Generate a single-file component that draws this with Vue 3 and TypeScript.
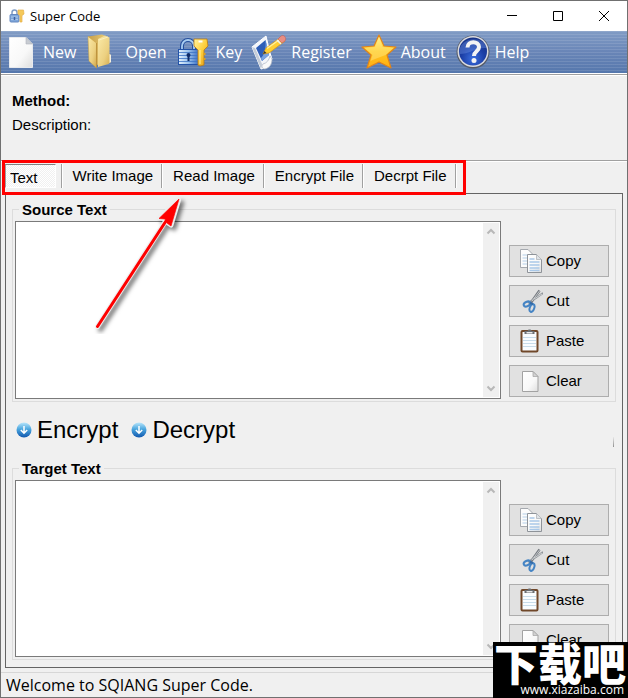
<script setup lang="ts">
import { ref } from 'vue'

interface Group {
  id: string
  title: string
}

const tools: string[] = ['New', 'Open', 'Key', 'Register', 'About', 'Help']
const tabs: string[] = ['Text', 'Write Image', 'Read Image', 'Encrypt File', 'Decrpt File']
const edits: string[] = ['Copy', 'Cut', 'Paste', 'Clear']
const source: Group = { id: 'source', title: 'Source Text' }
const target: Group = { id: 'target', title: 'Target Text' }
const groups: Group[] = [source, target]
const actions: string[] = ['Encrypt', 'Decrypt']

const activeTab = ref<string>('Text')
const texts = ref<Record<string, string>>({ source: '', target: '' })

function edit(id: string, action: string): void {
  if (action === 'Clear') texts.value[id] = ''
}
</script>

<template>
  <div class="window">
    <svg class="defs" width="0" height="0" aria-hidden="true">
      <defs>
        <linearGradient id="paper" x1="0" y1="0" x2="1" y2="1">
          <stop offset="0" stop-color="#ffffff" /><stop offset=".6" stop-color="#f8f8f8" /><stop offset="1" stop-color="#dedede" />
        </linearGradient>
        <linearGradient id="gold" x1="0" y1="0" x2="1" y2="1">
          <stop offset="0" stop-color="#fff3a0" /><stop offset=".5" stop-color="#ffcf3a" /><stop offset="1" stop-color="#dd9416" />
        </linearGradient>
        <linearGradient id="folderBack" x1="0" y1="0" x2="1" y2="0">
          <stop offset="0" stop-color="#c79f48" /><stop offset="1" stop-color="#ecd07c" />
        </linearGradient>
        <linearGradient id="folderFront" x1="0" y1="0" x2="1" y2="1">
          <stop offset="0" stop-color="#fbeaa8" /><stop offset=".6" stop-color="#ecd080" /><stop offset="1" stop-color="#d0a648" />
        </linearGradient>
        <linearGradient id="lock" x1="0" y1="0" x2="1" y2="0">
          <stop offset="0" stop-color="#e4f1fd" /><stop offset=".5" stop-color="#9cc3ec" /><stop offset="1" stop-color="#3c6fc4" />
        </linearGradient>
        <linearGradient id="star" x1="0" y1="0" x2="0" y2="1">
          <stop offset="0" stop-color="#fff08a" /><stop offset=".5" stop-color="#ffc620" /><stop offset="1" stop-color="#ffae12" />
        </linearGradient>
        <radialGradient id="helpBall" cx=".5" cy=".75" r=".75">
          <stop offset="0" stop-color="#3b6fe0" /><stop offset=".55" stop-color="#1c3fa6" /><stop offset="1" stop-color="#173284" />
        </radialGradient>
        <linearGradient id="ball" x1="0" y1="0" x2="0" y2="1">
          <stop offset="0" stop-color="#b9e6fb" /><stop offset=".45" stop-color="#49a5de" /><stop offset="1" stop-color="#1157ae" />
        </linearGradient>
      </defs>
    </svg>

    <header class="titlebar">
      <svg class="app-icon" viewBox="0 0 16 16" aria-hidden="true">
        <path d="M3 7V4.500a2.500 2.500 0 0 1 5 0V7" fill="none" stroke="#7f9cc6" stroke-width="1.500" />
        <rect x="1" y="6.500" width="9" height="7.500" rx="1" fill="#7fa6da" stroke="#6488c0" />
        <path d="M2 9h7M2 11.500h7" stroke="#abc8ec" />
        <path d="M5.500 9v3" stroke="#3c5f9e" stroke-width="1.500" />
        <path d="M9 2h5.500l.5 4-2 1.500V14h-2V7.500L9 6z" fill="#f5c95a" stroke="#e6b04a" stroke-width=".7" />
      </svg>
      <h1>Super Code</h1>
      <div class="caption">
        <button type="button" aria-label="Minimize"><svg viewBox="0 0 12 12"><path d="M1 5.500h10" /></svg></button>
        <button type="button" aria-label="Maximize"><svg viewBox="0 0 12 12"><path d="M1.500 1.500h9v9h-9z" /></svg></button>
        <button type="button" aria-label="Close"><svg viewBox="0 0 12 12"><path d="M1 1l10 10M11 1L1 11" /></svg></button>
      </div>
    </header>

    <nav class="toolbar" aria-label="Main">
      <button v-for="t in tools" :key="t" type="button" class="tool">
        <svg viewBox="0 0 36 36" aria-hidden="true">
          <g v-if="t === 'New'">
            <path d="M6.500 3.500H23L29.500 10v23.500h-23z" fill="url(#paper)" stroke="#e8eaee" />
            <path d="M23 3.500V10h6.500z" fill="#c8ccd2" stroke="#aeb4bd" stroke-width=".6" />
          </g>
          <g v-else-if="t === 'Open'">
            <path d="M3 2.500l14-2 7 3v22l-13 6z" fill="url(#folderBack)" />
            <path d="M13 5l7-3.500 4.500 2V20l1.500 1v7l-2.500 2-10.500 3z" fill="url(#folderFront)" />
            <path d="M24.500 20l1.500 1v7l-1.500 1z" fill="#f2efe2" />
            <path d="M14 6l9-3" stroke="#fdf3c8" stroke-width=".8" />
            <path d="M3 2.500l8.500 6.500v25L4 27z" fill="url(#folderFront)" stroke="#caa040" stroke-width=".5" />
            <path d="M11.500 9v24.500" stroke="#b98d38" stroke-width=".8" />
          </g>
          <g v-else-if="t === 'Key'">
            <path d="M7 16v-4a6 6 0 0 1 12 0v4" fill="none" stroke="#264f9c" stroke-width="4" />
            <path d="M7 16v-4a6 6 0 0 1 12 0v4" fill="none" stroke="#a8cdf2" stroke-width="1.800" />
            <rect x="3.500" y="15.500" width="20" height="15" fill="url(#lock)" stroke="#2353a8" />
            <path d="M4 18.500h19M4 21.500h19M4 24.500h19M4 27.500h19" stroke="#3b74c5" stroke-width=".8" />
            <circle cx="13.500" cy="21" r="2" fill="#0e2b68" /><path d="M13.500 21v6" stroke="#0e2b68" stroke-width="2" />
            <path d="M19 5h13l1 7-4 4v15l-4 1-2-1V16l-4-4z" fill="url(#gold)" stroke="#b97b14" stroke-width=".8" />
            <path d="M23.500 7.500h4" stroke="#fff" stroke-width="2" /><path d="M25 16v14" stroke="#fff0a0" />
            <path d="M28.500 19h2v2h-2M28.500 24h2v2h-2" fill="#dda01d" />
          </g>
          <g v-else-if="t === 'Register'">
            <path d="M1 13L15 2l4 17 2 6-7 9-4 1z" fill="#f4f6fa" stroke="#fff" />
            <path d="M5 14l9.500-8 3.500 15-7 6z" fill="#2e5eb8" />
            <path d="M14.500 6L18 21l-7 6-1-3c4-4 5-10 4.500-18z" fill="#7aa3e0" />
            <path d="M1 13l3 1 7 16-1 5z" fill="#c4ccd8" />
            <path d="M12 30c4-1 6-4 7-8l2 3c0 6-3 9-7 10-3 0-4-3-2-5z" fill="#fafafa" stroke="#aab3c1" stroke-width=".7" />
            <path d="M12 20l3-6L30 3l4 4-16 12z" fill="#ffcf32" stroke="#d89512" stroke-width=".7" />
            <path d="M16 14.500L30 4.500" stroke="#fff19a" stroke-width="1.500" />
            <path d="M27 5l3-3c3-2 6 2 4 5l-3 2z" fill="#e98e83" stroke="#bd625b" stroke-width=".6" />
            <path d="M26 6l4 4" stroke="#edeff1" stroke-width="1.500" /><path d="M12 20l1.500-3 2 2z" fill="#353535" />
          </g>
          <g v-else-if="t === 'About'">
            <path d="M18 1l5 11 12 1-9 8 4 13-12-6-12 6 4-13-9-8 12-1z" fill="url(#star)" stroke="#e0841b" stroke-width="1.200" stroke-linejoin="round" />
            <path d="M18 3l3.500 10 11 1-8 7-13 5-2 1 2-6-8-7 10.500-1z" fill="#fff6a8" opacity=".35" />
          </g>
          <g v-else>
            <circle cx="18" cy="18" r="16.500" fill="#555b67" /><circle cx="18" cy="17.500" r="15.500" fill="#d9dbe0" />
            <circle cx="18" cy="17.500" r="14" fill="url(#helpBall)" />
            <path d="M4.500 16C7 2 29 2 31.500 14 22 13 14 20 4.500 20z" fill="#7aa0ef" opacity=".35" />
            <path d="M12.500 13.500c0-7 11.500-7 11.500-.5 0 4.500-5 4-5 9" fill="none" stroke="#f4f4f4" stroke-width="4" />
            <circle cx="19" cy="26.500" r="2.500" fill="#f4f4f4" />
          </g>
        </svg>
        <span>{{ t }}</span>
      </button>
    </nav>

    <section class="info">
      <p class="method">Method:</p>
      <p>Description:</p>
    </section>

    <div class="tabs" role="tablist">
      <div v-for="t in tabs" :key="t" class="tab-cell">
        <button type="button" role="tab" class="tab" :class="{ active: t === activeTab }" :aria-selected="t === activeTab" @click="activeTab = t">{{ t }}</button>
      </div>
      <div class="tabs-mark"></div>
    </div>

    <main class="panel">
      <template v-for="g in groups" :key="g.id">
        <fieldset class="group">
          <legend :id="g.id + '-title'">{{ g.title }}</legend>
          <div class="field">
            <textarea v-model="texts[g.id]" :aria-labelledby="g.id + '-title'"></textarea>
            <div class="scroll" aria-hidden="true">
              <svg viewBox="0 0 16 16"><path d="M4.500 10L8 6.500 11.500 10" /></svg>
              <svg viewBox="0 0 16 16"><path d="M4.500 6L8 9.500 11.500 6" /></svg>
            </div>
          </div>
          <div class="edits">
            <button v-for="e in edits" :key="e" type="button" class="edit" @click="edit(g.id, e)">
              <svg viewBox="0 0 24 24" aria-hidden="true">
                <g v-if="e === 'Copy'">
                  <path d="M1.500.500H9L13.500 5v13.500h-12z" fill="#fcfcfc" stroke="#a5a9af" />
                  <path d="M3.500 6h7M3.500 9h7M3.500 12h7M3.500 15h7" stroke="#b4cfe9" />
                  <path d="M8.500 5.500h9l5 5v13h-14z" fill="url(#paper)" stroke="#8e9399" />
                  <path d="M17.500 5.500v5h5" fill="#dfe3e7" stroke="#a9adb2" stroke-width=".7" />
                  <path d="M10.500 10h5M10.500 13h10M10.500 16h10M10.500 19h10M10.500 21.500h10" stroke="#a9c8e8" stroke-width="1.400" />
                </g>
                <g v-else-if="e === 'Cut'" fill="none">
                  <path d="M20.500 1.500L16 8l-5 7" stroke="#74797f" stroke-width="2.500" />
                  <path d="M24 4l-7 5-8 5" stroke="#8f9499" stroke-width="2" />
                  <path d="M20.500 2L13 12M23 5l-8 5" stroke="#e6e8ea" stroke-width=".7" />
                  <ellipse cx="8" cy="15" rx="3.500" ry="2.200" transform="rotate(-25 8 15)" stroke="#4584c4" stroke-width="2" />
                  <ellipse cx="13" cy="19" rx="2.200" ry="4" transform="rotate(20 13 19)" stroke="#4584c4" stroke-width="2" />
                  <path d="M11 14l3 1" stroke="#356ba7" stroke-width="2" />
                </g>
                <g v-else-if="e === 'Paste'">
                  <rect x="2.500" y="2" width="16" height="20.500" rx="1" fill="#fafdff" stroke="#70482a" stroke-width="2" />
                  <path d="M4 8.500h13M4 11.500h13M4 14.500h13M4 17.500h13" stroke="#c8dcea" />
                  <path d="M5.500 2h3l1-1.500h2L13 2h2.500v3h-10z" fill="#6b6e72" /><path d="M7.500 3h6v1.500h-6z" fill="#e8e9ea" />
                </g>
                <g v-else>
                  <path d="M3.500 2.500h10.500l5 5v15H3.500z" fill="url(#paper)" stroke="#a2a2a2" />
                  <path d="M14 2.500v5h5z" fill="#d2d2d2" stroke="#a2a2a2" stroke-width=".7" />
                </g>
              </svg>
              <span>{{ e }}</span>
            </button>
          </div>
        </fieldset>
        <div v-if="g.id === 'source'" class="actions">
          <button v-for="a in actions" :key="a" type="button" class="action">
            <svg viewBox="0 0 16 16" aria-hidden="true">
              <circle cx="8" cy="8" r="7.500" fill="url(#ball)" />
              <path d="M8 4v7M4.800 8L8 11.200 11.200 8" fill="none" stroke="#fff" stroke-width="1.500" />
            </svg>
            <span>{{ a }}</span>
          </button>
          <i class="grip"></i>
        </div>
      </template>
    </main>

    <footer class="status">Welcome to SQIANG Super Code.</footer>

    <svg class="arrow" viewBox="0 0 100 144" aria-hidden="true">
      <path d="M7.500 136.500L75 32M88.500 10L70 28l7 1 1 4 3 2z" fill="#eee" stroke="#eee" stroke-width="5" stroke-linecap="round" stroke-linejoin="round" class="halo" />
      <path d="M7.500 136.500L76 31" stroke="#f00" stroke-width="3" stroke-linecap="round" />
      <path d="M89 9L69 28.500l6 .5 2 4 4 3z" fill="#f00" stroke="#f00" stroke-width=".7" />
    </svg>

    <div class="brand">
      <strong lang="zh-CN">下载吧</strong>
      <span>www.xiazaiba.com</span>
    </div>
  </div>
</template>

<style>
body {
  margin: 0;
}
</style>

<style scoped>
* {
  box-sizing: border-box;
}

.window {
  position: relative;
  display: flex;
  flex-direction: column;
  min-height: 100vh;
  border: 1px solid #707070;
  background: #f0f0f0;
  color: #000;
  font: 15px/24px "Liberation Sans", Arial, sans-serif;
}

.defs {
  position: absolute;
}

button {
  margin: 0;
  padding: 0;
  border: 0;
  background: none;
  color: inherit;
  font: inherit;
}

svg {
  display: block;
  flex: none;
}

.titlebar {
  display: flex;
  align-items: center;
  height: 30px;
  padding-left: 8px;
  background: #fff;
}

.app-icon {
  width: 16px;
  height: 16px;
}

h1 {
  flex: 1;
  margin: 0 0 0 5px;
  font: 13px/20px "Open Sans", "Noto Sans", sans-serif;
}

.caption {
  display: flex;
}

.caption button {
  display: grid;
  place-items: center;
  width: 46px;
  height: 28px;
}

.caption svg {
  width: 12px;
  height: 12px;
  fill: none;
  stroke: #000;
}

.toolbar {
  display: flex;
  align-items: center;
  gap: 9px;
  height: 42px;
  padding-left: 2px;
  background:
    repeating-linear-gradient(#ffffff1c 0 1px, #ffffff00 1px 3px),
    linear-gradient(#819cc5, #6985b7 50%, #5577ac);
  color: #fff;
  font: 16px/24px "Open Sans", "Noto Sans", sans-serif;
}

.tool {
  display: flex;
  align-items: center;
  gap: 4px;
}

.tool svg {
  width: 36px;
  height: 36px;
}

.info {
  padding: 15px 11px 23px;
  border-top: 1px solid #fff;
  border-bottom: 1px solid #a0a0a0;
  box-shadow: inset 0 1px #a0a0a0, inset 0 2px #fff, 0 1px #fff;
}

.info p {
  margin: 0;
}

.info .method {
  font-weight: bold;
}

.tabs {
  position: relative;
  display: flex;
  height: 32px;
  padding: 3px 4px 5px;
}

.tab-cell {
  display: flex;
  border-right: 1px solid #a0a0a0;
  box-shadow: 1px 0 #fff;
}

.tab-cell:first-child {
  padding-right: 5px;
}

.tab {
  padding: 0 8px 0 11px;
}

.tab.active {
  padding: 1px 17px 0 4px;
  border: 1px solid #fff;
  border-top-color: #808080;
  border-left-color: #a0a0a0;
  background: repeating-conic-gradient(#fff 0 25%, #f0f0f0 0 50%) 0 0 / 2px 2px;
}

/* Highlight frame around the tab strip */
.tabs-mark {
  position: absolute;
  top: -1px;
  left: 1px;
  width: 464px;
  height: 35px;
  border: 3px solid #f00;
  pointer-events: none;
}

.panel {
  display: flex;
  flex: 1;
  flex-direction: column;
  margin: 0 4px 4px;
  padding: 7px 6px;
  border: 1px solid #646464;
}

.group {
  display: flex;
  flex: 1 1 0;
  gap: 8px;
  min-width: 0;
  margin: 0;
  padding: 3px 6px 2px 2px;
  border: 1px solid #dcdcdc;
}

legend {
  margin-left: 4px;
  padding: 0 3px;
  font-weight: bold;
  line-height: 17px;
}

.field {
  display: flex;
  flex: 1;
  min-width: 0;
  padding: 1px;
  border: 1px solid #7a7a7a;
  background: #fff;
}

textarea {
  flex: 1;
  min-width: 0;
  margin: 0;
  padding: 2px;
  border: 0;
  outline: 0;
  background: #fff;
  font: inherit;
  resize: none;
}

.scroll {
  display: flex;
  flex-direction: column;
  justify-content: space-between;
  width: 16px;
  background: #f0f0f0;
}

.scroll svg {
  width: 16px;
  height: 17px;
  fill: none;
  stroke: #b8b8b8;
  stroke-width: 2px;
}

.edits {
  display: flex;
  flex-direction: column;
  gap: 8px;
  width: 100px;
  padding-top: 24px;
}

.edit {
  display: flex;
  align-items: center;
  gap: 3px;
  height: 32px;
  padding-left: 9px;
  border: 1px solid #adadad;
  background: #e1e1e1;
}

.edit svg {
  width: 24px;
  height: 24px;
}

.actions {
  display: flex;
  align-items: center;
  gap: 13px;
  height: 58px;
  padding: 0 2px 2px 4px;
}

.action {
  display: flex;
  align-items: center;
  gap: 5px;
  font-size: 24px;
  line-height: 28px;
}

.action svg {
  width: 16px;
  height: 16px;
}

.grip {
  width: 1px;
  height: 10px;
  margin: 24px 0 0 auto;
  background: linear-gradient(#e8e8e8, #909090);
}

.status {
  padding: 0 5px;
  border-top: 1px solid #d7d7d7;
  font: 16px/24px "Open Sans", "Noto Sans", sans-serif;
}

/* Pointer laid over the page, aimed at the tab strip */
.arrow {
  position: absolute;
  top: 189px;
  left: 89px;
  width: 100px;
  height: 144px;
  pointer-events: none;
}

.halo {
  filter: drop-shadow(3px 3px 2px #0008);
}

.brand {
  position: absolute;
  right: -1px;
  bottom: -1px;
  width: 135px;
  height: 56px;
  background: #000;
  color: #fff;
  text-align: right;
}

.brand strong {
  display: block;
  padding-right: 2px;
  font: 900 44px/40px "Noto Sans CJK SC", sans-serif;
  white-space: nowrap;
}

.brand span {
  display: block;
  padding-right: 4px;
  font: 12px/16px "Open Sans", "Noto Sans", sans-serif;
}
</style>
